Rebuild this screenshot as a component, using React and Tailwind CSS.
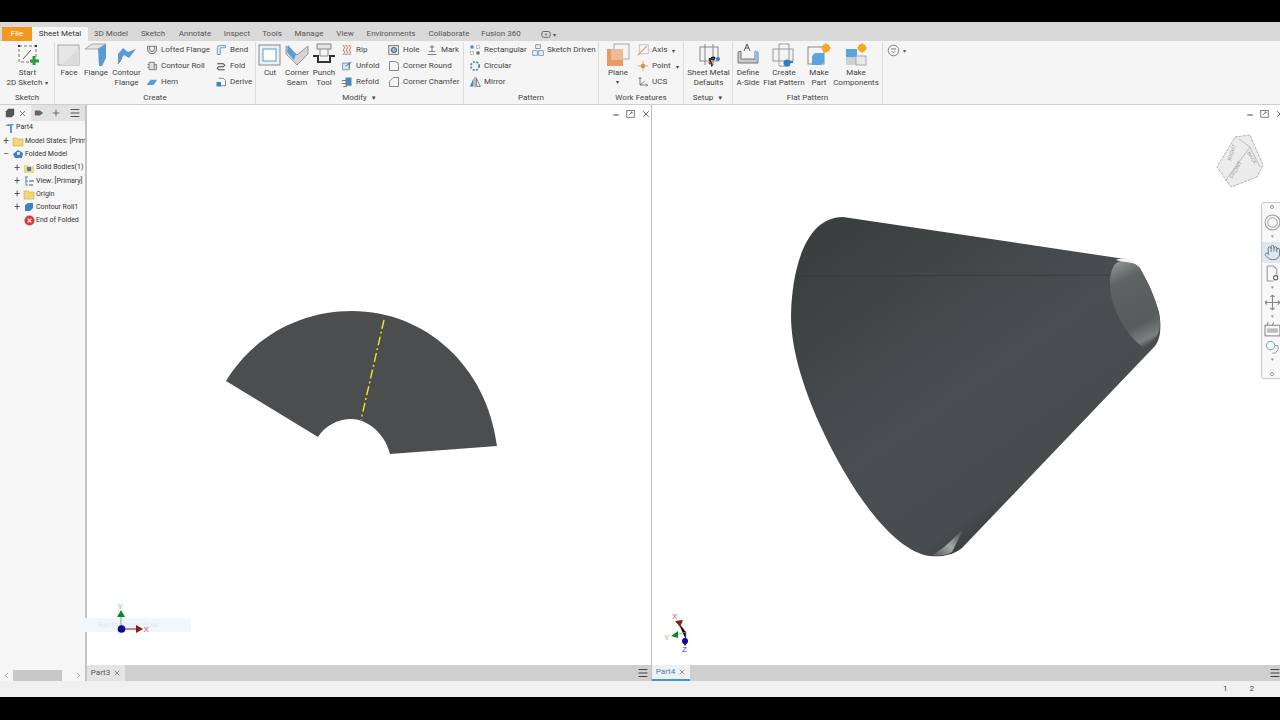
import React from 'react';
import { X, Minus, Plus, Menu, Hand, ChevronLeft, ChevronRight } from 'lucide-react';

const tabs = ['3D Model', 'Sketch', 'Annotate', 'Inspect', 'Tools', 'Manage', 'View', 'Environments', 'Collaborate', 'Fusion 360'];
const tabGaps = ['w-[46px]', 'w-[38px]', 'w-[46px]', 'w-[38px]', 'w-[32px]', 'w-[42px]', 'w-[30px]', 'w-[62px]', 'w-[54px]', 'w-[50px]'];

const Ico = ({ s = 12, v = 24, className = '', children }) => (
  <svg width={s} height={s} viewBox={`0 0 ${v} ${v}`} className={`shrink-0 ${className}`} fill="none">{children}</svg>
);

// ribbon icons, big ones are 24 units
const big = {
  sketch: <><rect x="3" y="3" width="17" height="16" stroke="#777" strokeDasharray="3 2" /><path d="M7 16l8-9" stroke="#555" /><rect x="2" y="2" width="2" height="2" fill="#333" /><rect x="19" y="2" width="2" height="2" fill="#333" /><path d="M18 13v9M14 18h9" stroke="#2a9d3c" strokeWidth="3" /></>,
  face: <><rect x="1" y="2" width="21" height="20" fill="#e6e6e6" stroke="#a5a5a5" /><path d="M4 22L22 6v16z" fill="#dcdcdc" /></>,
  flange: <><path d="M1 6L8 1h14L14 6z" fill="#e6e6e6" stroke="#aaa" /><path d="M14 6l8-5v14l-4 8h-3z" fill="#5b9bd5" /></>,
  contour: <><path d="M3 20V11l5-6 5 4 8-3-7 9-5-3-3 4z" fill="#5b9bd5" /><path d="M3 21l4-6" stroke="#666" /></>,
  cut: <><rect x="1" y="2" width="21" height="20" fill="#e9f1f8" stroke="#8a8a8a" /><rect x="5" y="6" width="13" height="12" fill="#fff" stroke="#5b9bd5" /></>,
  seam: <><path d="M1 3l11 9 11-9v8l-11 11L1 11z" fill="#d4d4d4" stroke="#999" /><path d="M3 2l8 9-2 6-7-8z" fill="#5b9bd5" /></>,
  punch: <><rect x="5" y="1" width="14" height="5" fill="#e3e3e3" stroke="#888" /><path d="M8 6v7h8V6" stroke="#888" /><path d="M1 13h5v6h12v-6h5" stroke="#333" strokeWidth="2" /></>,
  plane: <><rect x="8" y="1" width="15" height="15" fill="#f3f3f3" stroke="#aaa" /><rect x="1" y="6" width="16" height="17" fill="#e79a63" /><rect x="5" y="6" width="12" height="11" fill="#eebb98" /></>,
  defaults: <><rect x="3" y="4" width="18" height="14" fill="#f4f4f4" stroke="#888" /><path d="M8 1v21M16 1v21" stroke="#888" /><path d="M14 15c5-3 5 3 0 1s4 7 0 7" stroke="#222" strokeWidth="1.5" /><circle cx="21" cy="16" r="2" fill="#2a7fc9" /><circle cx="13" cy="20" r="1.5" fill="#b33" /></>,
  aside: <><path d="M2 9v11h20V9l-3-1v8H5V8z" fill="#c9c9c9" stroke="#777" /><path d="M19 8h3v10h-3z" fill="#8cc0e8" /><path d="M8 8l3-7 3 7M9 5h4" stroke="#555" /></>,
  flat: <><rect x="1" y="6" width="20" height="12" fill="#f3f3f3" stroke="#999" /><path d="M7 1h10v22H7z" stroke="#999" /><path d="M14 19h7" stroke="#2a7fc9" strokeWidth="2" /><circle cx="15" cy="20" r="3.5" fill="#2a7fc9" /></>,
  part: <><rect x="1" y="4" width="16" height="17" fill="#f4f4f4" stroke="#888" /><path d="M5 13l3-3h9v9l-3 3H5z" fill="#5aa5e0" /><circle cx="19" cy="5" r="4" fill="#f5a623" /><path d="M19 0v10M14 5h10" stroke="#f5a623" /></>,
  comps: <><rect x="2" y="6" width="11" height="9" fill="#5aa5e0" /><rect x="2" y="14" width="10" height="8" fill="#cfcfcf" /><rect x="12" y="13" width="10" height="9" fill="#e8e8e8" stroke="#aaa" /><circle cx="18" cy="5" r="4" fill="#f5a623" /><path d="M18 0v10M13 5h10" stroke="#f5a623" /></>,
};

const small = {
  lofted: <path d="M2 3h12v4a6 6 0 01-12 0zM5 4v3a3 3 0 006 0V4" stroke="#555" fill="#ddd" />,
  roll: <path d="M4 3h7v10H4zM2 6h2M2 10h2M11 6h3v7h-3" stroke="#666" fill="#ddd" />,
  hem: <path d="M1 12l5-7h9l-5 7z" fill="#5b9bd5" />,
  bend: <path d="M3 14V5a3 3 0 013-3h8v3H7v9z" fill="#d9e8f5" stroke="#4a88c0" />,
  fold: <path d="M3 5h8l2 2-2 2H5l-2 2 2 2h8" stroke="#444" strokeWidth="1.4" />,
  derive: <><path d="M5 3h6l3 3v7H7" stroke="#666" /><rect x="2" y="8" width="6" height="6" fill="#3a85c8" /></>,
  rip: <><path d="M2 2h12M2 14h12" stroke="#bbb" /><path d="M3 2l2 3-2 3 2 3-2 3M7 2l2 3-2 3 2 3-2 3M11 2l2 3-2 3 2 3-2 3" stroke="#c0392b" /></>,
  unfold: <><path d="M2 4h9v9H2z" fill="#d6e7f4" stroke="#4a88c0" /><path d="M6 8l8-5M11 3v8" stroke="#555" /></>,
  refold: <><rect x="6" y="2" width="8" height="11" fill="#4a88c0" /><path d="M1 6h6M1 10h6M3 14h5" stroke="#555" /></>,
  hole: <><rect x="1" y="2" width="13" height="12" fill="#e2e2e2" stroke="#666" /><circle cx="8" cy="8" r="3.5" fill="#8db8dc" stroke="#444" /></>,
  mark: <path d="M8 1v9M5 4h6M4 10h8M2 14h12" stroke="#555" />,
  round: <path d="M2 14V2h7a5 5 0 015 5v7z" stroke="#666" />,
  chamfer: <path d="M2 14V7l5-5h7v12z" stroke="#666" />,
  rect: <><rect x="2" y="2" width="4" height="4" fill="#4a88c0" /><rect x="10" y="2" width="4" height="4" stroke="#777" strokeDasharray="1 1" /><rect x="2" y="10" width="4" height="4" stroke="#777" strokeDasharray="1 1" /><rect x="10" y="10" width="4" height="4" fill="#666" /></>,
  circ: <circle cx="8" cy="8" r="5.5" stroke="#4a88c0" strokeWidth="2.5" strokeDasharray="2.5 2" />,
  mirror: <><path d="M1 14L6 3v11z" fill="#4a88c0" /><path d="M8 1v14" stroke="#555" /><path d="M15 14L10 3v11z" stroke="#666" /></>,
  driven: <><rect x="5" y="1" width="6" height="5" stroke="#777" /><rect x="1" y="9" width="6" height="6" stroke="#4a88c0" /><rect x="9" y="9" width="6" height="6" stroke="#4a88c0" /></>,
  axis: <><rect x="3" y="1" width="12" height="12" stroke="#b9b9b9" /><path d="M1 15L13 3" stroke="#e08a50" strokeWidth="1.4" /></>,
  point: <><path d="M8 1v14M1 8h14" stroke="#e08a50" /><circle cx="8" cy="8" r="3" fill="#e08a50" /></>,
  ucs: <path d="M4 2v10h10M2 4l2-2 2 2M12 10l2 2-2 2M4 12l6-5" stroke="#555" />,
};

function SmallBtn({ icon, label, caret, className = '' }) {
  return (
    <div className={`flex h-4 items-center gap-[3px] whitespace-nowrap ${className}`}>
      <Ico s={12} v={16}>{small[icon]}</Ico>
      <span>{label}</span>
      {caret && <span className="ml-[2px] text-[6px]">▾</span>}
    </div>
  );
}

function BigBtn({ icon, lines, caret, sideCaret, w, s = 24 }) {
  return (
    <div className={`flex shrink-0 flex-col items-center ${w}`}>
      <div className="flex h-[26px] items-center justify-center"><Ico s={s}>{big[icon]}</Ico></div>
      <div className="flex h-[21px] flex-col items-center justify-start whitespace-nowrap leading-[10px]">
        {lines.map((l, i) => (
          <span key={l}>{l}{sideCaret && i === lines.length - 1 && <span className="ml-[3px] text-[6px]">▾</span>}</span>
        ))}
        {caret && <span className="text-[6px] leading-[8px]">▾</span>}
      </div>
    </div>
  );
}

function Panel({ title, w, caret, children }) {
  return (
    <div className={`flex h-full shrink-0 flex-col border-r border-[#dcdcdc] ${w}`}>
      <div className="flex h-[49px] items-start">{children}</div>
      <div className="flex h-[13px] items-center justify-center gap-1 text-[8px] text-[#444]">
        {title}{caret && <span className="text-[6px]">▼</span>}
      </div>
    </div>
  );
}

const Col = ({ className = '', children }) => <div className={`flex shrink-0 flex-col ${className}`}>{children}</div>;

function Ribbon() {
  return (
    <div className="flex h-[64px] items-start border-b border-[#cfcfcf] bg-[#f5f5f5] pt-[1px] text-[8px] text-[#444]">
      <Panel title="Sketch" w="w-[55px]">
        <BigBtn icon="sketch" lines={['Start', '2D Sketch']} sideCaret w="w-[55px]" />
      </Panel>
      <Panel title="Create" w="w-[201px]">
        <div className="w-[2px]" />
        <BigBtn icon="face" lines={['Face']} w="w-[24px]" />
        <BigBtn icon="flange" lines={['Flange']} w="w-[30px]" />
        <BigBtn icon="contour" lines={['Contour', 'Flange']} w="w-[31px]" />
        <Col className="ml-[4px] w-[69px]">
          <SmallBtn icon="lofted" label="Lofted Flange" />
          <SmallBtn icon="roll" label="Contour Roll" />
          <SmallBtn icon="hem" label="Hem" />
        </Col>
        <Col>
          <SmallBtn icon="bend" label="Bend" />
          <SmallBtn icon="fold" label="Fold" />
          <SmallBtn icon="derive" label="Derive" />
        </Col>
      </Panel>
      <Panel title="Modify" w="w-[208px]" caret>
        <div className="w-[2px]" />
        <BigBtn icon="cut" lines={['Cut']} w="w-[24px]" />
        <BigBtn icon="seam" lines={['Corner', 'Seam']} w="w-[30px]" />
        <BigBtn icon="punch" lines={['Punch', 'Tool']} w="w-[24px]" />
        <Col className="ml-[5px] w-[47px]">
          <SmallBtn icon="rip" label="Rip" />
          <SmallBtn icon="unfold" label="Unfold" />
          <SmallBtn icon="refold" label="Refold" />
        </Col>
        <Col>
          <div className="flex">
            <SmallBtn icon="hole" label="Hole" className="w-[38px]" />
            <SmallBtn icon="mark" label="Mark" />
          </div>
          <SmallBtn icon="round" label="Corner Round" />
          <SmallBtn icon="chamfer" label="Corner Chamfer" />
        </Col>
      </Panel>
      <Panel title="Pattern" w="w-[135px]">
        <Col className="ml-[5px] w-[63px]">
          <SmallBtn icon="rect" label="Rectangular" />
          <SmallBtn icon="circ" label="Circular" />
          <SmallBtn icon="mirror" label="Mirror" />
        </Col>
        <Col>
          <SmallBtn icon="driven" label="Sketch Driven" />
        </Col>
      </Panel>
      <Panel title="Work Features" w="w-[85px]">
        <BigBtn icon="plane" lines={['Plane']} caret w="w-[38px]" />
        <Col>
          <SmallBtn icon="axis" label="Axis" caret />
          <SmallBtn icon="point" label="Point" caret />
          <SmallBtn icon="ucs" label="UCS" />
        </Col>
      </Panel>
      <Panel title="Setup" w="w-[49px]" caret>
        <BigBtn icon="defaults" lines={['Sheet Metal', 'Defaults']} w="w-[49px]" />
      </Panel>
      <Panel title="Flat Pattern" w="w-[150px]">
        <BigBtn icon="aside" lines={['Define', 'A-Side']} w="w-[30px]" />
        <BigBtn icon="flat" lines={['Create', 'Flat Pattern']} w="w-[42px]" />
        <BigBtn icon="part" lines={['Make', 'Part']} w="w-[28px]" />
        <BigBtn icon="comps" lines={['Make', 'Components']} w="w-[46px]" />
      </Panel>
      <div className="ml-[4px] flex items-center gap-[3px] pt-[2px] text-[#555]">
        <Ico s={13} v={16}><circle cx="8" cy="8" r="6.5" stroke="#666" /><path d="M5 6h6M6 9l2 2 2-2" stroke="#666" /></Ico>
        <span className="text-[6px]">▾</span>
      </div>
    </div>
  );
}

const Folder = () => (
  <Ico s={12} v={12}><path d="M1 3h4l1 1h5v7H1z" fill="#f4d67a" stroke="#c9a94e" strokeWidth="0.6" /></Ico>
);

const tree = [
  { label: 'Part4', icon: <Ico s={12} v={12}><path d="M2 4l3-2h6L9 4v7H7V4z" fill="#5b9bd5" /></Ico>, indent: 'pl-[3px]' },
  { label: 'Model States: [Prim', sign: '+', icon: <Folder />, indent: 'pl-[1px]' },
  { label: 'Folded Model', sign: '−', icon: <Ico s={12} v={12}><path d="M1 6l5-4 5 3-1 5H3z" fill="#3a7fc0" /><rect x="5" y="4" width="3" height="3" fill="#cfe3f4" /></Ico>, indent: 'pl-[1px]' },
  { label: 'Solid Bodies(1)', sign: '+', icon: <Ico s={12} v={12}><path d="M1 3h4l1 1h5v7H1z" fill="#f4d67a" /><rect x="4" y="5" width="4" height="4" fill="#3a85c8" /></Ico>, indent: 'pl-[12px]' },
  { label: 'View: [Primary]', sign: '+', icon: <Ico s={12} v={12}><path d="M2 2h3M3 2v8h2M3 6h2" stroke="#4a88c0" /><path d="M6 6h5M6 10h4" stroke="#555" /></Ico>, indent: 'pl-[12px]' },
  { label: 'Origin', sign: '+', icon: <Folder />, indent: 'pl-[12px]' },
  { label: 'Contour Roll1', sign: '+', icon: <Ico s={12} v={12}><path d="M2 10V4l3-2h5v5l-3 3z" fill="#3a85c8" /></Ico>, indent: 'pl-[12px]' },
  { label: 'End of Folded', icon: <Ico s={11} v={12}><circle cx="6" cy="6" r="5.5" fill="#d93a3a" /><path d="M4 4l4 4M8 4l-4 4" stroke="#fff" strokeWidth="1.3" /></Ico>, indent: 'pl-[24px]' },
];

function Browser() {
  return (
    <div className="flex w-[85px] shrink-0 flex-col bg-[#f6f6f6] text-[7px] text-[#333]">
      <div className="flex h-[16px] items-center bg-[#f3f3f3] text-[#555]">
        <div className="flex h-full w-[31px] items-center justify-center gap-[3px]">
          <Ico s={10} v={12}><path d="M1 4l3-3h7v7l-3 3H1z" fill="#555" /></Ico>
          <X size={9} />
        </div>
        <div className="flex h-full flex-1 items-center gap-[7px] bg-[#e2e2e2] pl-[3px]">
          <Ico s={10} v={12}><path d="M1 3h6l4 3-4 3H1z" fill="#666" /></Ico>
          <Plus size={10} />
          <Menu size={12} className="ml-[1px]" />
        </div>
      </div>
      <div className="flex flex-col">
        {tree.map((n) => (
          <div key={n.label} className={`flex h-[13.3px] items-center gap-[1px] overflow-hidden whitespace-nowrap ${n.indent}`}>
            {n.sign && <span className="w-[10px] shrink-0 text-center text-[10px] leading-none text-[#555]">{n.sign}</span>}
            {n.icon}
            <span>{n.label}</span>
          </div>
        ))}
      </div>
      <div className="mt-auto flex h-[11px] items-center text-[#888]">
        <ChevronLeft size={9} className="ml-[2px]" />
        <div className="ml-[2px] h-[11px] w-[49px] bg-[#c8c8c8]" />
        <ChevronRight size={9} className="ml-auto mr-[2px]" />
      </div>
    </div>
  );
}

function WinControls({ className = '' }) {
  return (
    <div className={`absolute top-[3px] flex items-center gap-[6px] text-[#444] ${className}`}>
      <Minus size={8} strokeWidth={3} className="mt-[3px]" />
      <Ico s={9} v={12}><rect x="1" y="2" width="10" height="9" stroke="#555" /><path d="M4 8l4-4M6 4h2v2" stroke="#555" /></Ico>
      <X size={10} />
    </div>
  );
}

function FlatPart() {
  return (
    <svg className="absolute inset-0 h-full w-full" viewBox="87 105 564 560">
      <path d="M226 381C254 335 302 311 352 311C425 311 487 366 497 446L390 454C384 430 364 419 352 419C337 419 325 426 318 437Z" fill="#4b4d4e" />
      <path d="M384 320L361 420" stroke="#f5e626" strokeWidth="1.4" strokeDasharray="9 3 2 3" />
      <path d="M121 629V612" stroke="#7cc48a" strokeWidth="1.2" />
      <path d="M121 629H140" stroke="#8b1a1a" strokeWidth="1" />
      <path d="M117 617l4-7 4 7z" fill="#0d8a1f" />
      <path d="M136 625l7 4-7 4z" fill="#8b1a1a" />
      <circle cx="121.500" cy="629" r="3.800" fill="#0a0a9a" />
      <text x="117.500" y="609" fontSize="8" fill="#66d680" fontFamily="Liberation Sans, sans-serif">Y</text>
      <text x="143.500" y="632" fontSize="8" fill="#d8485c" fontFamily="Liberation Sans, sans-serif">X</text>
    </svg>
  );
}

function Cone() {
  return (
    <svg className="absolute inset-0 h-full w-full" viewBox="652 105 628 560">
      <defs>
        <linearGradient id="cone" x1="0.1" y1="0.1" x2="0.75" y2="0.95">
          <stop offset="0" stopColor="#3c3f40" />
          <stop offset="0.5" stopColor="#4a4e50" />
          <stop offset="0.8" stopColor="#484c4e" />
          <stop offset="0.93" stopColor="#2d2f30" />
          <stop offset="1" stopColor="#3a3c3d" />
        </linearGradient>
        <linearGradient id="end" x1="0.3" y1="0" x2="0.6" y2="1">
          <stop offset="0" stopColor="#8a8d8e" />
          <stop offset="0.2" stopColor="#5f6263" />
          <stop offset="0.75" stopColor="#585b5c" />
          <stop offset="0.95" stopColor="#7c7f80" />
          <stop offset="1" stopColor="#5a5c5d" />
        </linearGradient>
        <linearGradient id="lip" x1="0" y1="1" x2="1" y2="0">
          <stop offset="0" stopColor="#55585a" />
          <stop offset="0.45" stopColor="#a5a8a9" />
          <stop offset="1" stopColor="#3a3c3d" />
        </linearGradient>
      </defs>
      <path d="M843 217L1118 258C1135 256 1150 280 1159 312C1162 328 1160 340 1155 346L962 548C952 556 940 557 930 556C895 552 852 495 820 425C800 380 791 345 791 315C792 270 805 217 843 217Z" fill="url(#cone)" />
      <path d="M795 276L1110 275" stroke="#38393a" strokeWidth="0.8" />
      <path d="M1118 262C1125 259 1135 262 1140 268C1150 285 1160 310 1160 322C1160 335 1155 342 1143 347C1125 335 1110 305 1110 285C1110 272 1113 264 1118 262Z" fill="url(#end)" />
      <path d="M1116 260C1122 257 1130 258 1136 264C1129 262 1122 262 1116 260Z" fill="#f2f2f2" />
      <path d="M932 555C942 550 952 540 964 528L952 552C946 556 938 556 932 555Z" fill="url(#lip)" />
      <g transform="translate(1217 135)">
        <path d="M18 2L33 0L46 30L40 42L14 52L0 32Z" fill="#ececec" stroke="#b5b5b5" strokeDasharray="3 1" />
        <path d="M33 12L43 32M33 12L22 4M33 12L8 46" stroke="#bdbdbd" />
        <text x="14" y="26" fontSize="5.500" fill="#9c9c9c" fontFamily="Liberation Sans, sans-serif" transform="rotate(-72 14 26)">RIGHT</text>
        <text x="16" y="44" fontSize="5.500" fill="#9c9c9c" fontFamily="Liberation Sans, sans-serif" transform="rotate(-62 16 44)">FRONT</text>
        <text x="30" y="18" fontSize="5" fill="#9c9c9c" fontFamily="Liberation Sans, sans-serif" transform="rotate(58 30 18)">BACK</text>
      </g>
      <path d="M678 622L686 632V640M686 632L675 635" stroke="#999" strokeWidth="0.8" />
      <path d="M675 621l8-1l-3 7z" fill="#8b1a1a" />
      <path d="M671 636l7-5v7z" fill="#0d8a1f" />
      <circle cx="685" cy="641" r="3" fill="#0a0a9a" />
      <path d="M682 641h6l-3 5z" fill="#0a0a9a" />
      <text x="672" y="619" fontSize="8" fill="#d8485c" fontFamily="Liberation Sans, sans-serif">X</text>
      <text x="664" y="640" fontSize="8" fill="#66d680" fontFamily="Liberation Sans, sans-serif">Y</text>
      <text x="682" y="652" fontSize="8" fill="#3b3bc0" fontFamily="Liberation Sans, sans-serif">Z</text>
    </svg>
  );
}

function NavBar() {
  return (
    <div className="absolute right-[-8px] top-[97px] flex h-[177px] w-[27px] flex-col items-center rounded-[3px] border border-[#c9c9c9] bg-[#f8f8f8] pr-[5px] text-[#888]">
      <div className="mt-[2px] h-[4px] w-[4px] rounded-full border border-[#999]" />
      <Ico s={17} v={16} className="mt-[5px]"><circle cx="8" cy="8" r="7" stroke="#999" /><circle cx="8" cy="8" r="4.5" stroke="#aaa" /></Ico>
      <span className="mt-[1px] text-[5px] leading-[8px]">▾</span>
      <div className="mt-[2px] flex h-[21px] w-full shrink-0 items-center justify-center bg-[#dbe7f3]"><Hand size={17} strokeWidth={1.2} className="text-[#666]" /></div>
      <Ico s={17} v={16} className="mt-[2px]"><path d="M3 1h6l3 3v6M3 1v14h6" stroke="#999" /><circle cx="11" cy="12" r="2" stroke="#666" /></Ico>
      <span className="mt-[1px] text-[5px] leading-[8px]">▾</span>
      <Ico s={17} v={16} className="mt-[3px]"><path d="M8 1v14M1 8h14M8 1L6 3M8 1l2 2M1 8l2-2M1 8l2 2M15 8l-2-2M15 8l-2 2M8 15l-2-2M8 15l2-2" stroke="#888" /></Ico>
      <span className="mt-[1px] text-[5px] leading-[8px]">▾</span>
      <Ico s={17} v={16} className="mt-[1px]"><rect x="1" y="4" width="14" height="10" stroke="#888" /><rect x="3" y="7" width="10" height="4" fill="#bbb" /><path d="M3 4l1-3M8 4l1-3" stroke="#888" /></Ico>
      <Ico s={15} v={16} className="mt-[2px]"><circle cx="6" cy="6" r="4.500" stroke="#5b9bd5" /><path d="M10 6h4v4l-3 4H8" stroke="#999" /></Ico>
      <span className="text-[5px] leading-[8px]">▾</span>
      <div className="mt-auto mb-[2px] h-[4px] w-[4px] rounded-full border border-[#999]" />
    </div>
  );
}

export default function App() {
  return (
    <div className="flex h-[720px] w-[1280px] flex-col overflow-hidden bg-black font-['Roboto','Liberation_Sans',sans-serif]">
      <div className="h-[22px] shrink-0" />
      {/* tab row */}
      <div className="flex h-[19px] shrink-0 items-end bg-[#d9d9d9] pl-[2px] text-[8px] text-[#555]">
        <div className="flex h-[14px] w-[30px] items-center justify-center bg-[#f39a1e] text-white">File</div>
        <div className="flex h-[14px] w-[56px] items-center justify-center bg-[#f5f5f5] text-[#333]">Sheet Metal</div>
        <div className="flex h-[14px] items-center">
          {tabs.map((t, i) => (
            <div key={t} className={`flex justify-center whitespace-nowrap ${tabGaps[i]}`}>{t}</div>
          ))}
          <div className="ml-[15px] flex items-center gap-[2px]">
            <Ico s={10} v={12}><rect x="1" y="3" width="10" height="7" rx="2" stroke="#555" /><circle cx="6" cy="6.500" r="1" fill="#555" /></Ico>
            <span className="text-[6px]">▾</span>
          </div>
        </div>
      </div>
      <Ribbon />
      {/* work area */}
      <div className="flex h-[576px] shrink-0">
        <Browser />
        <div className="w-[2px] shrink-0 bg-[#c4c4c4]" />
        <div className="flex w-[564px] shrink-0 flex-col">
          <div className="relative h-[560px] bg-white">
            <div className="absolute left-[-10px] top-[513px] flex h-[14px] w-[114px] items-center bg-[#f1f7fd] pl-[21px] text-[8px] text-[#e3e8ee]">Rectangular Spar</div>
            <FlatPart />
            <WinControls className="right-0" />
          </div>
          <div className="flex h-[16px] items-center bg-[#cfcfcf] text-[8px] text-[#555]">
            <div className="flex h-full w-[38px] items-center justify-center gap-[3px] bg-[#e4e4e4]">Part3 <X size={8} /></div>
            <Menu size={12} className="ml-auto mr-[2px] text-[#444]" />
          </div>
        </div>
        <div className="w-[1px] shrink-0 bg-[#bdbdbd]" />
        <div className="flex flex-1 flex-col">
          <div className="relative h-[560px] overflow-hidden bg-white">
            <Cone />
            <WinControls className="right-[-5px]" />
            <NavBar />
          </div>
          <div className="flex h-[16px] items-center bg-[#cfcfcf] text-[8px] text-[#3b82b8]">
            <div className="flex h-full w-[38px] items-center justify-center gap-[3px] border-b-2 border-[#3a9bd5] bg-[#f0f0f0]">Part4 <X size={8} className="text-[#666]" /></div>
            <Menu size={12} className="ml-auto mr-[-1px] text-[#444]" />
          </div>
        </div>
      </div>
      {/* status bar */}
      <div className="flex h-[16px] shrink-0 items-center justify-end bg-[#f0f0f0] pr-[26px] text-[8px] text-[#444]">
        <span className="mr-[22px]">1</span>
        <span>2</span>
      </div>
    </div>
  );
}
